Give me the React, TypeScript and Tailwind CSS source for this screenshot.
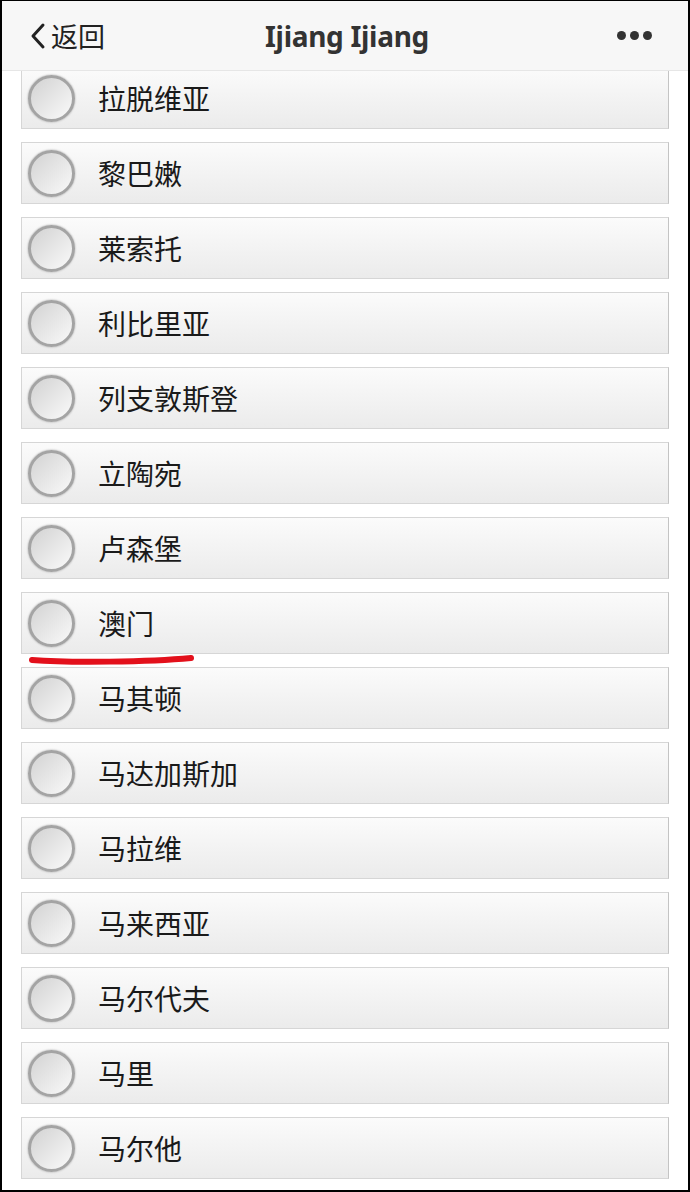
import React from "react";

const items = [
  "拉脱维亚",
  "黎巴嫩",
  "莱索托",
  "利比里亚",
  "列支敦斯登",
  "立陶宛",
  "卢森堡",
  "澳门",
  "马其顿",
  "马达加斯加",
  "马拉维",
  "马来西亚",
  "马尔代夫",
  "马里",
  "马尔他",
];

function Row({ label }: { label: string }) {
  return (
    <div className="ml-[19px] mr-[19px] h-[62px] flex items-center border border-[#d6d6d6] border-r-[#c4c4c4] bg-gradient-to-b from-[#fbfbfb] to-[#ebebeb]">
      <div className="ml-[6px] w-[47px] h-[47px] rounded-full border-[3px] border-[#a4a4a4] bg-gradient-to-br from-[#d2d2d2] to-[#fafafa] shadow-[0_0_2px_#999]" />
      <span className="ml-[23px] text-[28px] leading-none text-[#1a1a1a] font-['Noto_Sans_CJK_SC',sans-serif]">
        {label}
      </span>
    </div>
  );
}

export default function App() {
  return (
    <div className="relative w-[690px] h-[1192px] overflow-hidden bg-white border-t border-x-2 border-b-2 border-black">
      <div className="flex flex-col gap-[13px] pt-[66px]">
        {items.map((it) => (
          <Row key={it} label={it} />
        ))}
      </div>

      <svg className="absolute left-[27px] top-[651px]" width="170" height="16" viewBox="0 0 170 16">
        <path d="M3 8 C 40 11, 120 10, 162 6" stroke="#e3101b" strokeWidth="6" strokeLinecap="round" fill="none" />
      </svg>

      <div className="absolute top-0 left-0 right-0 h-[70px] bg-[#f7f7f7] border-b border-[#e6e6e6] flex items-center font-['Noto_Sans','Noto_Sans_CJK_SC',sans-serif]">
        <div className="flex items-center ml-[26px] text-[#222]">
          <svg width="20" height="30" viewBox="0 0 20 30" className="mr-[3px]">
            <path d="M15 4 L5 15 L15 26" stroke="#222" strokeWidth="3" fill="none" strokeLinecap="round" strokeLinejoin="round" />
          </svg>
          <span className="text-[27px] leading-none font-['Noto_Sans_CJK_SC',sans-serif]">返回</span>
        </div>
        <div className="flex-1 text-center text-[28px] font-bold text-[#333] leading-none tracking-[-0.3px] mr-[28px]">
          Ijiang Ijiang
        </div>
        <div className="flex items-center gap-[4px] mr-[36px]">
          <span className="w-[9px] h-[9px] rounded-full bg-[#333]" />
          <span className="w-[9px] h-[9px] rounded-full bg-[#333]" />
          <span className="w-[9px] h-[9px] rounded-full bg-[#333]" />
        </div>
      </div>
    </div>
  );
}
